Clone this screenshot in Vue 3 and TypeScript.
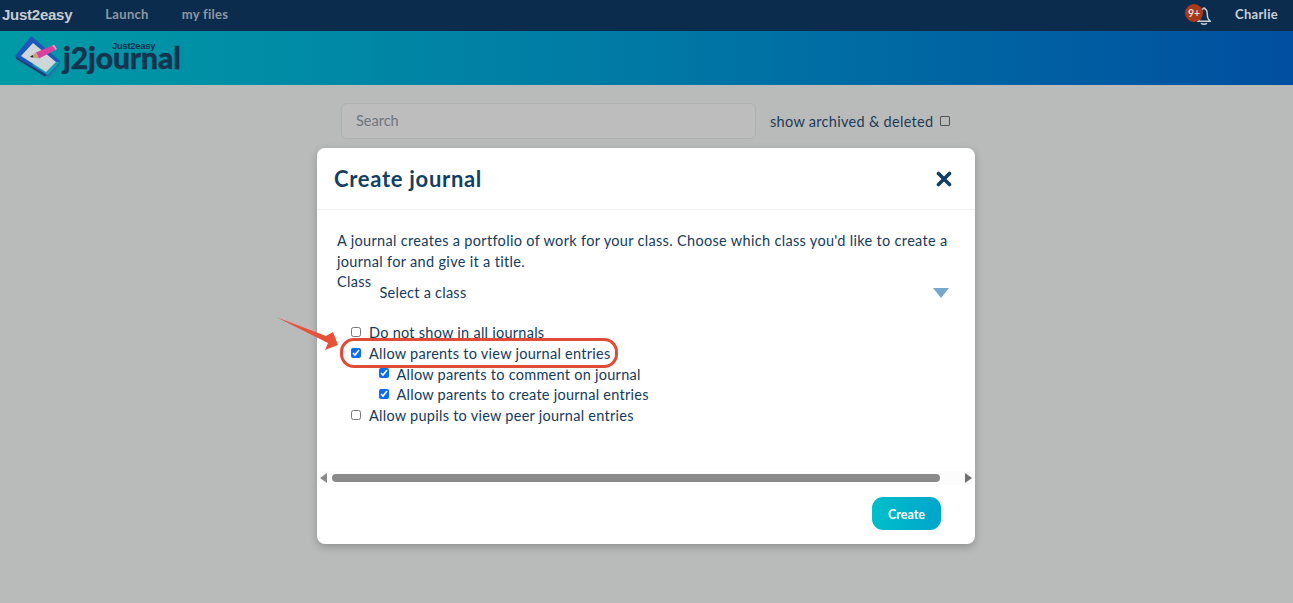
<script setup lang="ts">
const options = [
  { label: 'Do not show in all journals', checked: false, sub: false },
  { label: 'Allow parents to view journal entries', checked: true, sub: false },
  { label: 'Allow parents to comment on journal', checked: true, sub: true },
  { label: 'Allow parents to create journal entries', checked: true, sub: true },
  { label: 'Allow pupils to view peer journal entries', checked: false, sub: false },
]
</script>

<template>
  <div class="page">
    <nav class="topbar">
      <span class="brand">Just2easy</span>
      <a class="nav-link launch">Launch</a>
      <a class="nav-link">my files</a>
      <span class="spacer"></span>
      <span class="bell-wrap">
        <svg class="bell" viewBox="0 0 20 20" width="20" height="20" fill="none" stroke="#c9d0d6" stroke-width="1.4" stroke-linecap="round" stroke-linejoin="round">
          <path d="M10 2c-.7 0-1 .4-1 1C7 3.800 6.700 5.500 6.700 8.500c0 3-.7 5-3.200 6.800h13c-2.500-1.800-3.200-3.800-3.200-6.800 0-3-.3-4.700-2.300-5.500 0-.6-.3-1-1-1z" />
          <path d="M7.500 17.500c.8 1 4.200 1 5 0" />
        </svg>
        <span class="badge">9+</span>
      </span>
      <span class="user">Charlie</span>
    </nav>

    <header class="appbar">
      <svg class="logo" viewBox="0 0 46 46" width="46" height="46">
        <path d="M3 25 L33 43 L36 42 L46 30 L18 9Z" fill="#13879d" stroke="#13879d" stroke-width="1.500" stroke-linejoin="round" />
        <path d="M2 23 L31 41 L44 27 L17 6Z" fill="#20396f" stroke="#20396f" stroke-linejoin="round" />
        <path d="M2 21 L17.500 2 L46 27 L34 40Z" fill="#1d58b8" stroke="#1d58b8" stroke-width="1.500" stroke-linejoin="round" />
        <path d="M24 26 L46 27 L34 40 L18 30Z" fill="#14a0ad" />
        <path d="M7 21 L19 8 L42 27 L32 37Z" fill="#cdd7da" />
        <path d="M22 17.500 L38 10.500 L41.500 15 L25 23.500Z" fill="#d9409f" />
        <path d="M38 10.500 L40 9.500 L43 14 L41.500 15Z" fill="#ee8fc4" />
        <path d="M16 22 L22 17.500 L25 23.500Z" fill="#caa078" />
        <path d="M16 22 L18.500 20 L19.500 22.500Z" fill="#1d2530" />
      </svg>
      <div class="wordmark">
        <span class="wm-small">Just2easy</span>
        <span class="wm-big">j2journal</span>
      </div>
    </header>

    <main class="content">
      <div class="search-row">
        <div class="search">Search</div>
        <label class="archived">
          show archived &amp; deleted
          <span class="fake-box"></span>
        </label>
      </div>
    </main>

    <section class="modal">
      <div class="modal-head">
        <h2>Create journal</h2>
        <svg viewBox="0 0 16 16" width="16" height="16" stroke="#123f66" stroke-width="3.600" stroke-linecap="round">
          <path d="M2.500 2.500 13.500 13.500M13.500 2.500 2.500 13.500" />
        </svg>
      </div>
      <div class="modal-body">
        <p>A journal creates a portfolio of work for your class. Choose which class you'd like to create a journal for and give it a title.</p>
        <div class="class-row">
          <span class="class-label">Class</span>
          <span class="class-value">Select a class</span>
          <span class="tri"></span>
        </div>
        <ul class="options">
          <li v-for="o in options" :key="o.label" :class="{ sub: o.sub }">
            <input type="checkbox" :checked="o.checked" />
            <span>{{ o.label }}</span>
          </li>
        </ul>
        <div class="scrollbar">
          <span class="arrow left"></span>
          <span class="thumb"></span>
          <span class="arrow right"></span>
        </div>
      </div>
      <div class="modal-foot">
        <button type="button">Create</button>
      </div>
    </section>

    <svg class="pointer" viewBox="0 0 70 40" width="70" height="40">
      <path d="M1 2 L51 21 L58 17 L63 30 L50 35 L53 28Z" fill="#e8503a" />
    </svg>
    <div class="ring"></div>
  </div>
</template>

<style>
html, body { margin: 0; background: #b9baba; }
</style>

<style scoped>
.page {
  position: relative;
  width: 1293px;
  height: 603px;
  overflow: hidden;
  background: #b9baba;
  font-family: Lato, "Open Sans", sans-serif;
  color: #143a5c;
}
.topbar {
  height: 31px;
  box-sizing: border-box;
  background: #0c2c4d;
  display: flex;
  align-items: center;
  padding: 0 15px 3px 2px;
  color: #8d98a4;
  font-size: 13px;
  font-weight: 700;
}
.brand {
  color: #c7ccd1;
  font-family: "Liberation Sans", sans-serif;
  font-size: 15px;
  letter-spacing: -0.25px;
}
.nav-link { letter-spacing: 0.3px; margin-left: 33px; }
.launch { margin-left: 33px; }
.spacer { flex: 1; }
.bell-wrap { position: relative; width: 20px; height: 20px; margin-right: 21px; margin-top: 3px; }
.bell { display: block; }
.badge {
  position: absolute;
  left: -9px;
  top: -2px;
  width: 18px;
  height: 18px;
  border-radius: 50%;
  background: #a83a1c;
  color: #e3ddd8;
  font-size: 10.500px;
  line-height: 18px;
  text-align: center;
}
.user { color: #c9d0d6; letter-spacing: 0.3px; }
.appbar {
  height: 54px;
  background: linear-gradient(90deg, #009aa6 0%, #0079a5 50%, #004fa0 100%);
  display: flex;
  align-items: center;
  padding-left: 14px;
  box-sizing: border-box;
}
.logo { flex: none; }
.wordmark { position: relative; margin-left: 3px; display: flex; flex-direction: column; width: 120px; height: 30px; }
.wm-small {
  position: absolute;
  top: -2px;
  left: 49px;
  font-family: "Liberation Sans", sans-serif;
  font-size: 9.500px;
  line-height: 9px;
  font-weight: 700;
  color: #14334f;
  letter-spacing: -0.3px;
}
.wm-big {
  font-size: 30px;
  line-height: 12px;
  font-weight: 900;
  color: #14334f;
  margin-top: 7.500px;
  letter-spacing: -0.1px;
  -webkit-text-stroke: 0.4px #14334f;
}
.content { display: flex; justify-content: center; padding-top: 18px; }
.search-row { display: flex; align-items: center; width: 610px; margin-left: -1px; }
.search {
  width: 415px;
  height: 36px;
  box-sizing: border-box;
  border: 1px solid #aeb0b2;
  border-radius: 6px;
  background: #bdbdbd;
  color: #6e7680;
  font-size: 14.500px;
  line-height: 34px;
  padding-left: 14px;
}
.archived {
  margin-left: 14px;
  font-size: 14.500px;
  color: #1d3a56;
  display: flex;
  align-items: center;
  white-space: nowrap;
  letter-spacing: 0.3px;
}
.fake-box {
  width: 8px;
  height: 8px;
  border: 1px solid #4e5358;
  border-radius: 1px;
  margin-left: 7px;
}
.modal {
  position: absolute;
  left: 317px;
  top: 148px;
  width: 658px;
  height: 396px;
  background: #fff;
  border-radius: 8px;
  box-shadow: 0 3px 8px rgba(0, 0, 0, 0.22);
  display: flex;
  flex-direction: column;
}
.modal-head {
  height: 62px;
  box-sizing: border-box;
  border-bottom: 1px solid #f1f1f1;
  display: flex;
  align-items: center;
  justify-content: space-between;
  padding: 0 23px 0 17px;
}
.modal-head h2 {
  margin: 0;
  font-size: 22px;
  font-weight: 700;
  color: #123f66;
  letter-spacing: 0.7px;
}
.modal-body {
  flex: 1;
  padding: 20px 21px 0 20px;
  font-size: 14.500px;
  line-height: 21px;
  color: #143a5c;
  letter-spacing: 0.32px;
}
.modal-body p { margin: 0 0 1px; }
.class-row { display: flex; position: relative; height: 31px; }
.class-label { line-height: 20px; margin-top: -1px; }
.class-value { margin-left: 8px; margin-top: 10px; line-height: 20px; font-size: 14.500px; letter-spacing: 0.25px; }
.tri {
  position: absolute;
  right: 5px;
  top: 15px;
  border-left: 8px solid transparent;
  border-right: 8px solid transparent;
  border-top: 10px solid #76a7cf;
}
.options { list-style: none; margin: 18.500px 0 0 14px; padding: 0; letter-spacing: 0.26px; }
.options li { display: flex; align-items: center; height: 20.700px; }
.options li.sub { padding-left: 27.500px; }
.options input {
  width: 10px;
  height: 10px;
  margin: -2px 8px 0 0;
  flex: none;
  accent-color: #0b6cf0;
}
.scrollbar {
  position: absolute;
  left: 0;
  right: 0;
  top: 323px;
  height: 14px;
  display: flex;
  align-items: center;
  padding: 0 3px;
  background: #fcfcfc;
}
.thumb { flex: 1; height: 8px; border-radius: 4px; background: #8a8a8a; margin: 0 25px 0 5px; }
.arrow { width: 0; height: 0; border-top: 5px solid transparent; border-bottom: 5px solid transparent; }
.arrow.left { border-right: 7px solid #8a8a8a; }
.arrow.right { border-left: 7px solid #707070; }
.modal-foot {
  display: flex;
  justify-content: flex-end;
  padding: 0 34px 14px 0;
}
.modal-foot button {
  width: 69px;
  height: 33px;
  border: 0;
  border-radius: 11px;
  padding: 2px 0 0;
  background: linear-gradient(90deg, #00bfc9, #00a5cc);
  color: #fff;
  font-family: inherit;
  font-size: 12.500px;
  font-weight: 700;
}
.pointer { position: absolute; left: 275px; top: 315px; }
.ring {
  position: absolute;
  left: 340px;
  top: 338px;
  width: 278px;
  height: 30px;
  box-sizing: border-box;
  border: 3px solid #e14c37;
  border-radius: 14px;
}
</style>
